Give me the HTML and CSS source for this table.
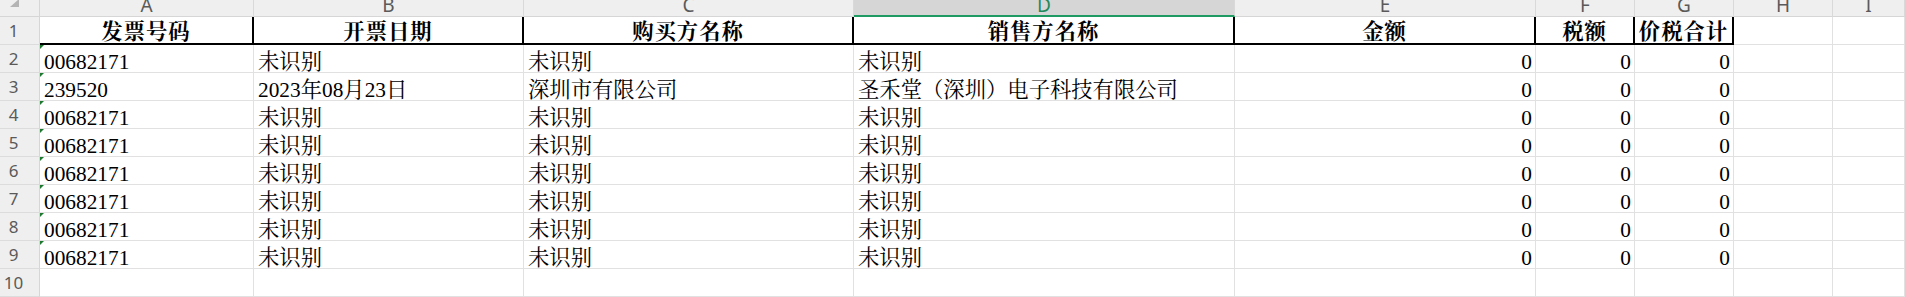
FILE: index.html
```html
<!DOCTYPE html>
<html lang="zh-CN">
<head>
<meta charset="utf-8">
<title>发票清单</title>
<link rel="stylesheet" href="styles.css">
</head>
<body>
<div class="sheet">
  <!-- column letters -->
  <div class="corner"><svg class="corner-mark" width="9" height="8" viewBox="0 0 9 8"><polygon points="9,0 9,8 0,8" fill="#b4b4b4"/></svg></div>
  <div class="colhead">A</div>
  <div class="colhead">B</div>
  <div class="colhead">C</div>
  <div class="colhead sel">D</div>
  <div class="colhead">E</div>
  <div class="colhead">F</div>
  <div class="colhead">G</div>
  <div class="colhead">H</div>
  <div class="colhead">I</div>

  <!-- row 1: titles -->
  <div class="rowhead">1</div>
  <div class="cell hd">发票号码</div>
  <div class="cell hd">开票日期</div>
  <div class="cell hd">购买方名称</div>
  <div class="cell hd">销售方名称</div>
  <div class="cell hd">金额</div>
  <div class="cell hd">税额</div>
  <div class="cell hd">价税合计</div>
  <div class="cell"></div>
  <div class="cell"></div>

  <div class="rowhead">2</div>
  <div class="cell flag">00682171</div>
  <div class="cell">未识别</div>
  <div class="cell">未识别</div>
  <div class="cell">未识别</div>
  <div class="cell num">0</div>
  <div class="cell num">0</div>
  <div class="cell num">0</div>
  <div class="cell"></div>
  <div class="cell"></div>

  <div class="rowhead">3</div>
  <div class="cell flag">239520</div>
  <div class="cell">2023年08月23日</div>
  <div class="cell">深圳市有限公司</div>
  <div class="cell">圣禾堂（深圳）电子科技有限公司</div>
  <div class="cell num">0</div>
  <div class="cell num">0</div>
  <div class="cell num">0</div>
  <div class="cell"></div>
  <div class="cell"></div>

  <div class="rowhead">4</div>
  <div class="cell flag">00682171</div>
  <div class="cell">未识别</div>
  <div class="cell">未识别</div>
  <div class="cell">未识别</div>
  <div class="cell num">0</div>
  <div class="cell num">0</div>
  <div class="cell num">0</div>
  <div class="cell"></div>
  <div class="cell"></div>

  <div class="rowhead">5</div>
  <div class="cell flag">00682171</div>
  <div class="cell">未识别</div>
  <div class="cell">未识别</div>
  <div class="cell">未识别</div>
  <div class="cell num">0</div>
  <div class="cell num">0</div>
  <div class="cell num">0</div>
  <div class="cell"></div>
  <div class="cell"></div>

  <div class="rowhead">6</div>
  <div class="cell flag">00682171</div>
  <div class="cell">未识别</div>
  <div class="cell">未识别</div>
  <div class="cell">未识别</div>
  <div class="cell num">0</div>
  <div class="cell num">0</div>
  <div class="cell num">0</div>
  <div class="cell"></div>
  <div class="cell"></div>

  <div class="rowhead">7</div>
  <div class="cell flag">00682171</div>
  <div class="cell">未识别</div>
  <div class="cell">未识别</div>
  <div class="cell">未识别</div>
  <div class="cell num">0</div>
  <div class="cell num">0</div>
  <div class="cell num">0</div>
  <div class="cell"></div>
  <div class="cell"></div>

  <div class="rowhead">8</div>
  <div class="cell flag">00682171</div>
  <div class="cell">未识别</div>
  <div class="cell">未识别</div>
  <div class="cell">未识别</div>
  <div class="cell num">0</div>
  <div class="cell num">0</div>
  <div class="cell num">0</div>
  <div class="cell"></div>
  <div class="cell"></div>

  <div class="rowhead">9</div>
  <div class="cell flag">00682171</div>
  <div class="cell">未识别</div>
  <div class="cell">未识别</div>
  <div class="cell">未识别</div>
  <div class="cell num">0</div>
  <div class="cell num">0</div>
  <div class="cell num">0</div>
  <div class="cell"></div>
  <div class="cell"></div>

  <div class="rowhead">10</div>
  <div class="cell"></div>
  <div class="cell"></div>
  <div class="cell"></div>
  <div class="cell"></div>
  <div class="cell"></div>
  <div class="cell"></div>
  <div class="cell"></div>
  <div class="cell"></div>
  <div class="cell"></div>
</div>
</body>
</html>
```

FILE: styles.css
```css
* {
  box-sizing: border-box;
}

html, body {
  margin: 0;
  padding: 0;
  background: #ffffff;
  overflow: hidden;
}

.sheet {
  display: grid;
  grid-template-columns: 40px 214px 270px 330px 381px 301px 99px 99px 99px 1fr;
  grid-template-rows: 17px repeat(10, 28px);
  width: 1905px;
  height: 297px;
}

/* header strip */
.corner,
.colhead,
.rowhead {
  background: #efefef;
  color: #5a5a5a;
  font-family: "Noto Sans", "Open Sans", sans-serif;
  overflow: hidden;
}

.corner {
  border-right: 1px solid #d6d6d6;
  border-bottom: 1px solid #d6d6d6;
  display: flex;
  justify-content: flex-start;
  align-items: flex-start;
  padding: 0 0 0 10px;
}

.corner-mark {
  display: block;
  margin-top: -1px;
}

.colhead {
  border-right: 1px solid #d9d9d9;
  border-bottom: 1px solid #d6d6d6;
  font-size: 19px;
  line-height: 11px;
  text-align: center;
}

.colhead.sel {
  background: #d6d6d6;
  color: #1f8a5b;
  border-bottom: 2px solid #1f9a63;
}

.rowhead {
  border-right: 1px solid #d6d6d6;
  border-bottom: 1px solid #dcdcdc;
  font-size: 17px;
  line-height: 27px;
  text-align: center;
  padding-right: 12px;
}

/* worksheet cells */
.cell {
  position: relative;
  border-right: 1px solid #e1e1e1;
  border-bottom: 1px solid #e1e1e1;
  font-family: "Liberation Serif", "Noto Serif CJK SC", "Noto Sans CJK SC", serif;
  font-size: 21.33px;
  line-height: 20px;
  color: #000;
  white-space: nowrap;
  overflow: hidden;
  display: flex;
  align-items: flex-end;
  padding: 0 3px 0 4px;
}

.cell.hd {
  border-right: 2px solid #000;
  border-bottom: 2px solid #000;
  justify-content: center;
  font-weight: bold;
  letter-spacing: 1px;
  padding: 0 0 1px 0;
}

.cell.num {
  justify-content: flex-end;
}

/* number-stored-as-text marker */
.cell.flag::before {
  content: "";
  position: absolute;
  top: 0;
  left: 0;
  border-top: 4px solid #1b7a2e;
  border-right: 4px solid transparent;
}
```
